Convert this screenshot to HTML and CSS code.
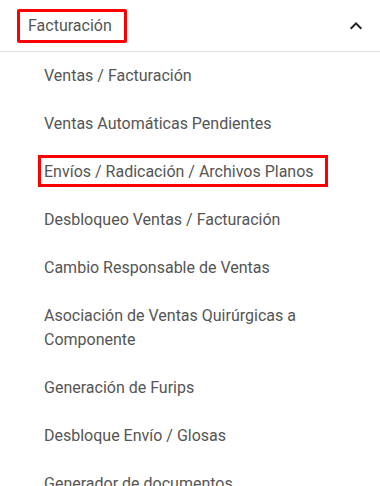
FILE: index.html
```html
<!DOCTYPE html>
<html lang="es">
<head>
<meta charset="utf-8">
<title>Facturación</title>
<link rel="stylesheet" href="styles.css">
</head>
<body>
<div class="panel">
  <div class="panel-header">
    <span class="panel-title">Facturación</span>
    <svg class="chevron" viewBox="0 0 24 24" width="24" height="24" aria-hidden="true">
      <path d="M12 8l-6 6 1.41 1.41L12 10.83l4.59 4.58L18 14z"/>
    </svg>
  </div>
  <ul class="menu">
    <li class="menu-item">Ventas / Facturación</li>
    <li class="menu-item">Ventas Automáticas Pendientes</li>
    <li class="menu-item"><span class="mark">Envíos / Radicación / Archivos Planos</span></li>
    <li class="menu-item">Desbloqueo Ventas / Facturación</li>
    <li class="menu-item">Cambio Responsable de Ventas</li>
    <li class="menu-item">Asociación de Ventas Quirúrgicas a Componente</li>
    <li class="menu-item">Generación de Furips</li>
    <li class="menu-item">Desbloque Envío / Glosas</li>
    <li class="menu-item">Generador de documentos</li>
  </ul>
</div>
</body>
</html>
```
FILE: styles.css
```css
html, body {
  margin: 0;
  padding: 0;
  background: #fff;
}
body {
  font-family: Roboto, "Liberation Sans", sans-serif;
  font-size: 16px;
  color: #555;
}
.panel {
  width: 380px;
}
.panel-header {
  display: flex;
  align-items: center;
  justify-content: space-between;
  box-sizing: border-box;
  height: 52px;
  padding: 9px 12px 8px 17px;
  border-bottom: 1px solid #e2e2e2;
}
.panel-title {
  display: inline-block;
  border: 3px solid #f00;
  border-radius: 2px;
  padding: 0 12px 0 8px;
  line-height: 28px;
  color: #555;
}
.chevron {
  fill: #222;
  display: block;
}
.menu {
  list-style: none;
  margin: 0;
  padding: 0;
}
.menu-item {
  padding: 12px 16px 12px 44px;
  line-height: 24px;
}
.mark {
  padding: 1px 8px 0 0;
  outline: 3px solid #f00;
  outline-offset: 3px;
}
```
